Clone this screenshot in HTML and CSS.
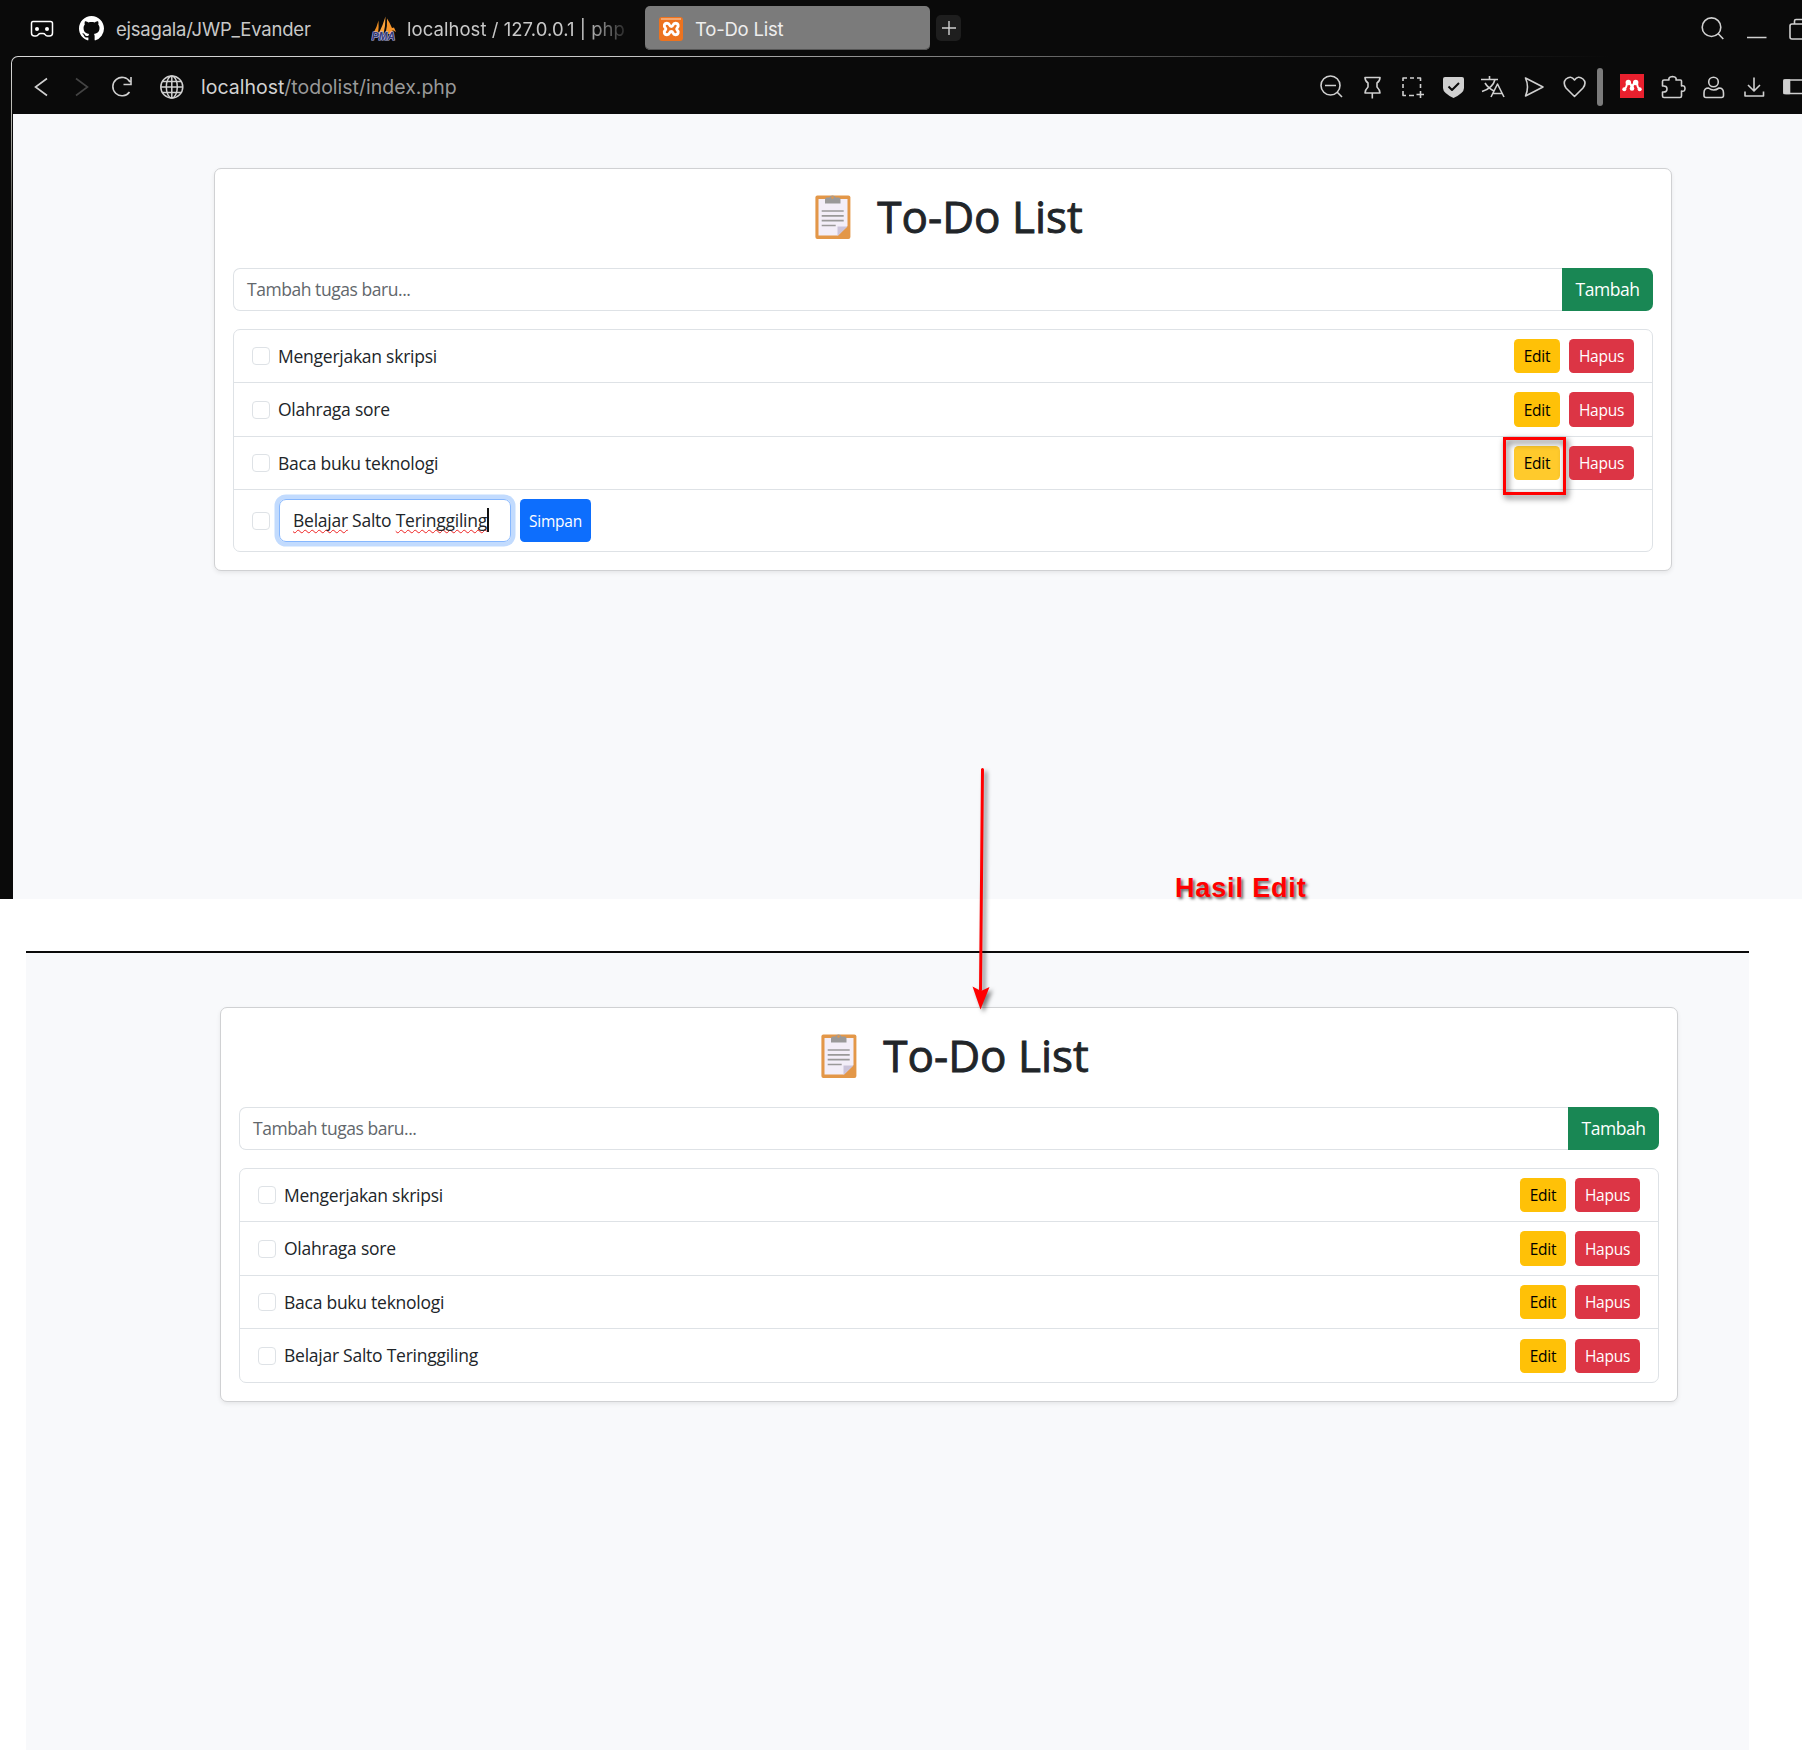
FILE: index.html
```html
<!DOCTYPE html>
<html lang="id">
<head>
<meta charset="utf-8">
<title>To-Do List</title>
<link rel="stylesheet" href="styles.css">
</head>
<body>
<svg class="defs" width="0" height="0">
  <symbol id="clipboard" viewBox="0 0 36 46">
    <rect x=".4" y="1.6" width="35" height="43.4" rx="2" fill="#e39748"/>
    <path d="M3.500 5H32.500V32L23 41.500H3.500Z" fill="#f3eef8"/>
    <path d="M22.500 32.500H32.500L22.500 42Z" fill="#cbc3d9"/>
    <path d="M10 5.500Q10 3.500 12 3.500H14.500A3.200 3.200 0 0 1 20.500 3.500H23.500Q25.500 3.500 25.500 5.500V9.500H10Z" fill="#9a9999"/>
    <circle cx="17.500" cy="3.500" r="1.300" fill="#e39748"/>
    <path d="M6.700 17H28.700M6.700 21.800H28.700M6.700 26.700H28.700M6.700 31.500H20.700" stroke="#9a9999" stroke-width="1.700"/>
  </symbol>
</svg>
<div class="browser">
  <header class="tabs">
    <svg class="tab-menu" width="24" height="18" viewBox="0 0 24 18"><path d="M3 1.500H20.500Q22.500 1.500 22.500 3.500V13Q22.500 16 19.500 16H17.500Q16 16 15.200 14.600 14.400 13.500 13 13.500H10.500Q9.100 13.500 8.300 14.600 7.500 16 6 16H4.500Q1.500 16 1.500 13V3.500Q1.500 1.500 3 1.500Z" fill="none" stroke="#fff" stroke-width="1.500"/><circle cx="7" cy="9" r="2" fill="#fff"/><circle cx="17" cy="9" r="2" fill="#fff"/></svg>
    <div class="tab tab-github">
      <svg width="25" height="25" viewBox="0 0 16 16" fill="#fff"><path d="M8 0C3.580 0 0 3.580 0 8c0 3.540 2.290 6.530 5.470 7.590.4.070.55-.17.55-.38 0-.19-.01-.82-.01-1.490-2.010.37-2.530-.49-2.690-.94-.09-.23-.48-.94-.82-1.130-.28-.15-.68-.52-.01-.53.63-.01 1.080.58 1.230.82.72 1.210 1.870.87 2.330.66.070-.52.28-.87.51-1.070-1.780-.2-3.640-.89-3.640-3.950 0-.87.31-1.590.82-2.150-.08-.2-.36-1.020.08-2.120 0 0 .67-.21 2.200.82.64-.18 1.320-.27 2-.27s1.360.09 2 .27c1.530-1.040 2.200-.82 2.200-.82.44 1.100.16 1.920.08 2.120.51.56.82 1.270.82 2.150 0 3.070-1.870 3.750-3.650 3.950.29.25.54.73.54 1.480 0 1.070-.01 1.930-.01 2.200 0 .21.15.46.55.38A8.010 8.010 0 0 0 16 8c0-4.420-3.580-8-8-8z"/></svg>
      <span>ejsagala/JWP_Evander</span>
    </div>
    <div class="tab tab-pma">
      <svg width="26" height="26" viewBox="0 0 26 26"><path d="M7.500 4.500Q8 11 7 18H2Q6 11 7.500 4.500Z" fill="#ee8e22"/><path d="M14.500 0.500Q14.500 10 12.500 18H7.500Q12 9 14.500 .5Z" fill="#fba23c"/><path d="M16 2.500Q19 7 21 12L23 11.500 25 16 21.500 14 22 18H14.500Q16.500 10 16 2.500Z" fill="#f7952a"/><text x=".8" y="24.300" class="pma-word">PMA</text></svg>
      <span class="fade">localhost / 127.0.0.1 | phpM</span>
    </div>
    <div class="tab tab-active">
      <svg width="24" height="24" viewBox="0 0 24 24"><rect width="24" height="24" rx="3" fill="#ed731f"/><rect x="2" y="1" width="20" height="2" fill="#f6a66d"/><path d="M8 6.300C5 6.300 4.500 9.500 6.500 11.200Q7.200 12 6.500 12.800C4.500 14.500 5 17.700 8 17.700Q9.800 17.700 10.500 16 11.200 14.500 12.300 14.500 13.400 14.500 14 16 14.700 17.700 16.500 17.700C19.500 17.700 20 14.500 18 12.800Q17.300 12 18 11.200C20 9.500 19.500 6.300 16.500 6.300Q14.700 6.300 14 8 13.400 9.500 12.300 9.500 11.200 9.500 10.500 8 9.800 6.300 8 6.300Z" fill="none" stroke="#fff" stroke-width="2.900"/></svg>
      <span>To-Do List</span>
    </div>
    <div class="new-tab"><svg width="14" height="14" viewBox="0 0 14 14"><path d="M7 0V14M0 7H14" stroke="#d0d0d0" stroke-width="1.400"/></svg></div>
    <svg class="window-tools" width="104" height="26" viewBox="1698 14 104 26" fill="none" stroke="#d0d0d0" stroke-width="1.600"><circle cx="1711.500" cy="26.200" r="9.300"/><path d="M1718 32.500L1723.300 38M1747 36.500H1766.500M1802 23H1792Q1790 23 1790 25V36Q1790 38 1792 38H1802M1794.500 22.500V20Q1794.500 18.500 1796 18.500H1802"/></svg>
  </header>
  <div class="frame">
    <nav class="toolbar">
      <svg class="nav-icons" width="150" height="26" viewBox="34 74 150 26" fill="none" stroke="#d0d0d0" stroke-width="1.600"><path d="M47 78.500L35.500 87 47 95.500"/><path d="M76 78.500L87.500 87 76 95.500" stroke="#444"/><path d="M130 82A9.200 9.200 0 1 0 129.500 92M131 77V84.500H123.500"/><g stroke-width="1.500"><circle cx="171.800" cy="87" r="11"/><ellipse cx="171.800" cy="87" rx="5.500" ry="11"/><path d="M171.800 76V98M161 87H182.600M162.500 81.500H181M162.500 92.500H181"/></g></svg>
      <div class="address"><b>localhost</b>/todolist/index.php</div>
      <svg class="tools" width="486" height="40" viewBox="1316 67 486 40" fill="none" stroke="#d0d0d0" stroke-width="1.600" stroke-linejoin="round">
        <circle cx="1330.500" cy="85.500" r="9.500"/><path d="M1325 85.500H1336M1337 92L1342 97"/>
        <path d="M1365 77.500H1380Q1380 81 1377 83V87Q1380 90 1380 93H1365Q1365 90 1368 87V83Q1365 81 1365 77.500ZM1372.300 93V98.500"/>
        <path d="M1403 81V78H1407M1410 78H1414M1417 78H1420.500V81M1403 84V88M1403 91V95.500H1406M1409 95.500H1414M1420.500 84V88M1420.500 91V98M1416.500 94.500H1424"/>
        <path d="M1445 77H1462Q1464 77 1464 79V88Q1464 93 1453.500 98 1443 93 1443 88V79Q1443 77 1445 77Z" fill="#d0d0d0" stroke="none"/><path d="M1448.500 86.500L1452 90 1459 83" stroke="#0a0a0a" stroke-width="2"/>
        <path d="M1481 79.500H1498M1489.500 76V79.500M1495 79.500Q1493 88 1482 91.500M1485 83Q1488 88 1494 91M1491 97L1497.500 84 1504 97M1493 93.500H1502"/>
        <path d="M1525.500 78L1543 87 1525.500 96Q1529.500 87 1525.500 78Z"/>
        <path d="M1574.500 96.500L1566 88Q1562.500 82.500 1566 79 1571 75 1574.500 80 1578 75 1583 79 1587 82.500 1583 88Z"/>
        <rect x="1597" y="68" width="6" height="38" rx="3" fill="#7b7b7b" stroke="none"/>
        <rect x="1620" y="74" width="24" height="24" fill="#e9202e" stroke="none"/>
        <path d="M1624.500 89Q1626.500 88 1627 83M1628.500 82.500Q1631.500 84 1632 88.500 1632.500 84 1635.500 82.500M1637 83Q1637.500 88 1639.500 89" stroke="#fff" stroke-width="2"/><g fill="#fff" stroke="none"><circle cx="1628.300" cy="82.500" r="2.700"/><circle cx="1635.700" cy="82.500" r="2.700"/><circle cx="1624.300" cy="89.300" r="2"/><circle cx="1632" cy="88.500" r="2.300"/><circle cx="1639.700" cy="89.300" r="2"/></g>
        <path d="M1664 80H1669Q1668 77 1672.500 76.500 1677 77 1676 80H1680.500Q1681.500 80 1681.500 81V86Q1685 85 1685 88.500 1685 92 1681.500 91V96Q1681.500 97.500 1680 97.500H1664Q1662.500 97.500 1662.500 96V92Q1667 92.500 1667 89 1667 85.500 1662.500 86V81.500Q1662.500 80 1664 80Z"/>
        <circle cx="1713.500" cy="82" r="4.800"/><path d="M1708.500 88Q1704 88 1704 93V95.500Q1704 97.500 1706 97.500H1721.500Q1723.500 97.500 1723.500 95.500V93Q1723.500 88 1719 88Q1713.500 92 1708.500 88Z"/>
        <path d="M1754 77.500V90.500M1748 85L1754 91 1760 85M1745 91.500V96H1763.500V91.500"/>
        <path d="M1802 80H1786Q1784 80 1784 82V91.500Q1784 93.500 1786 93.500H1802"/><rect x="1784" y="80" width="5.500" height="13.500" fill="#d0d0d0"/>
      </svg>
    </nav>
    <main class="page page-top">
      <section class="card">
        <h1><svg width="36" height="46"><use href="#clipboard"/></svg><span>To-Do List</span></h1>
        <form class="add"><div class="field">Tambah tugas baru...</div><button type="button">Tambah</button></form>
        <ul class="list">
          <li><i class="check"></i><span class="task">Mengerjakan skripsi</span><button type="button" class="btn edit">Edit</button><button type="button" class="btn delete">Hapus</button></li>
          <li><i class="check"></i><span class="task">Olahraga sore</span><button type="button" class="btn edit">Edit</button><button type="button" class="btn delete">Hapus</button></li>
          <li><i class="check"></i><span class="task">Baca buku teknologi</span><button type="button" class="btn edit hover">Edit<span class="marker"></span></button><button type="button" class="btn delete">Hapus</button></li>
          <li class="editing"><i class="check"></i><div class="edit-field"><span class="misspelt">Belajar</span> Salto <span class="misspelt">Teringgiling</span><i class="caret"></i></div><button type="button" class="btn save">Simpan</button></li>
        </ul>
      </section>
    </main>
  </div>
</div>
<div class="page page-bottom">
  <section class="card">
    <h1><svg width="36" height="46"><use href="#clipboard"/></svg><span>To-Do List</span></h1>
    <form class="add"><div class="field">Tambah tugas baru...</div><button type="button">Tambah</button></form>
    <ul class="list">
      <li><i class="check"></i><span class="task">Mengerjakan skripsi</span><button type="button" class="btn edit">Edit</button><button type="button" class="btn delete">Hapus</button></li>
      <li><i class="check"></i><span class="task">Olahraga sore</span><button type="button" class="btn edit">Edit</button><button type="button" class="btn delete">Hapus</button></li>
      <li><i class="check"></i><span class="task">Baca buku teknologi</span><button type="button" class="btn edit">Edit</button><button type="button" class="btn delete">Hapus</button></li>
      <li><i class="check"></i><span class="task">Belajar Salto Teringgiling</span><button type="button" class="btn edit">Edit</button><button type="button" class="btn delete">Hapus</button></li>
    </ul>
  </section>
</div>
<svg class="arrow" width="40" height="260" viewBox="965 760 40 260"><path d="M982.500 769.500L980.500 990" stroke="#f00" stroke-width="3" stroke-linecap="round"/><path d="M972.500 986.500L981 991 989.500 987 980.500 1009.500Z" fill="#f00"/></svg>
<div class="note">Hasil Edit</div>
</body>
</html>
```
FILE: styles.css
```css
* { box-sizing: border-box; }
body { margin: 0; width: 1802px; height: 1750px; position: relative; overflow: hidden; background: #fff; font-family: "Open Sans", "Noto Sans", sans-serif; color: #212529; }
svg { flex: none; }
.defs { position: absolute; }
button { border: 0; font: inherit; letter-spacing: inherit; padding: 0; }
.browser { height: 899px; background: #0a0a0a; overflow: hidden; }

.tabs { height: 56px; display: flex; align-items: center; padding: 0 0 1px 30px; font: 18.5px Inter, sans-serif; color: #c8c8c8; }
.tab-menu { margin-top: 3px; }
.tab { display: flex; align-items: center; white-space: nowrap; }
.tab-github { width: 290px; padding-left: 25px; margin-top: 2px; letter-spacing: -.22px; }
.tab-github span { margin-left: 12px; }
.tab-pma { width: 301px; padding-left: 27px; margin-top: 2px; }
.fade { width: 219px; margin-left: 10px; overflow: hidden; letter-spacing: .05px; mask-image: linear-gradient(90deg, #000 178px, transparent 226px); }
.pma-word { font: italic bold 10.5px "Liberation Sans", sans-serif; fill: #34397a; stroke: #b9bce0; stroke-width: 1.200px; paint-order: stroke; }
.tab-active { width: 285px; height: 44px; padding-left: 14px; border-radius: 5px; background: #7b7b7b; color: #eee; box-shadow: inset 0 -1px #555; letter-spacing: -.22px; }
.tab-active svg { margin-top: 2px; }
.tab-active span { margin: 2px 0 0 12px; }
.new-tab { width: 25px; height: 26px; margin-left: 6px; border-radius: 5px; background: #1e1e1e; display: flex; align-items: center; justify-content: center; }
.window-tools { margin-left: auto; }

.frame { margin-left: 11px; height: 843px; padding: 1px 0 0 1px; border-radius: 7px 0 0 0; background: linear-gradient(#d8d8d8 0, #b0b0a8 60px, #55554f 150px, #2a2a28 300px, #0a0a0a 520px) 0 6px / 1px 100% no-repeat, linear-gradient(90deg, #d8d8d8 0, #c8c8c8 600px, #303030 1280px, #0a0a0a 1600px) 0 0 / 100% 6px no-repeat; }
.toolbar { height: 57px; display: flex; align-items: center; padding-left: 22px; padding-top: 3px; background: #0a0a0a; border-radius: 6px 0 0 0; }
.address { margin-left: 17px; font: 19.5px Inter, sans-serif; color: #999; white-space: nowrap; }
.address b { font-weight: 400; color: #d2d2d2; }
.tools { margin-left: auto; }

.page { background: #f8f9fb; }
.page-top { height: 785px; padding: 54px 0 0 201px; border-left: 1px solid #0a0a0a; }
.page-bottom { width: 1723px; height: 799px; margin: 52px 0 0 26px; padding: 54px 0 0 194px; border-top: 2px solid #0a0a0a; }
.card { width: 1458px; padding: 18px; background: #fff; border: 1px solid #d0d1d3; border-radius: 7px; box-shadow: 0 2px 4px rgba(0,0,0,.075); }
h1 { margin: 0 0 18px; height: 63px; padding-left: 12px; display: flex; align-items: center; justify-content: center; gap: 26px; font-weight: 500; font-size: 44px; line-height: 54px; -webkit-text-stroke: .9px #212529; }
h1 svg { margin-bottom: 3px; -webkit-text-stroke: 0; }
h1 span { margin-top: -5px; }
.add { display: flex; height: 43px; margin-bottom: 18px; font-size: 17.5px; letter-spacing: -.45px; }
.field { flex: 1; border: 1px solid #dee2e6; border-right: 0; border-radius: 7px 0 0 7px; padding-left: 13px; line-height: 41px; color: #62676c; }
.add button { width: 91px; padding-bottom: 2px; border-radius: 0 7px 7px 0; background: #198754; color: #fff; }
.list { margin: 0; padding: 0; list-style: none; border: 1px solid #dee2e6; border-radius: 7px; font-size: 17.5px; letter-spacing: -.25px; }
.list li { display: flex; align-items: center; height: 53px; padding: 0 18px; border-bottom: 1px solid #dee2e6; }
.list li:nth-child(2) { height: 54px; }
.list li:last-child { border-bottom: 0; }
.list li.editing { height: 61px; }
.check { width: 18px; height: 18px; margin-right: 8px; border: 1px solid #dee2e6; border-radius: 4px; }
.task { flex: 1; padding-bottom: 1px; }
.btn { height: 34px; border-radius: 4.500px; font-size: 15.500px; position: relative; }
.list li:nth-child(2) .btn { height: 35px; }
.edit { width: 46px; margin-right: 9px; background: #ffc107; color: #000; }
.edit.hover { background: #ffca2c; }
.delete { width: 65px; background: #dc3545; color: #fff; }
.marker { position: absolute; left: -11px; top: -9px; width: 63px; height: 58px; border: 3px solid #f00; filter: drop-shadow(2px 3px 3px rgba(0,0,0,.65)); }
.edit-field { display: flex; align-items: center; white-space: pre; width: 232px; height: 43px; margin: 0 9px 0 1px; padding: 0 0 1px 13px; border: 1px solid #86b7fe; border-radius: 7px; box-shadow: 0 0 0 4.500px #c2dbfe; }
.misspelt { text-decoration: underline wavy #e22 1px; text-underline-offset: 2px; text-decoration-skip-ink: none; }
.caret { width: 2px; height: 24px; background: #111; }
.list .save { width: 71px; height: 43px; background: #0d6efd; color: #fff; }

.arrow { position: absolute; left: 965px; top: 760px; filter: drop-shadow(3px 3px 2px rgba(0,0,0,.5)); }
.note { position: absolute; left: 1175px; top: 871px; font: bold 27px/34px "Liberation Sans", sans-serif; letter-spacing: .85px; color: #f00; text-shadow: 2px 2px 3px rgba(0,0,0,.6); white-space: nowrap; }
```
